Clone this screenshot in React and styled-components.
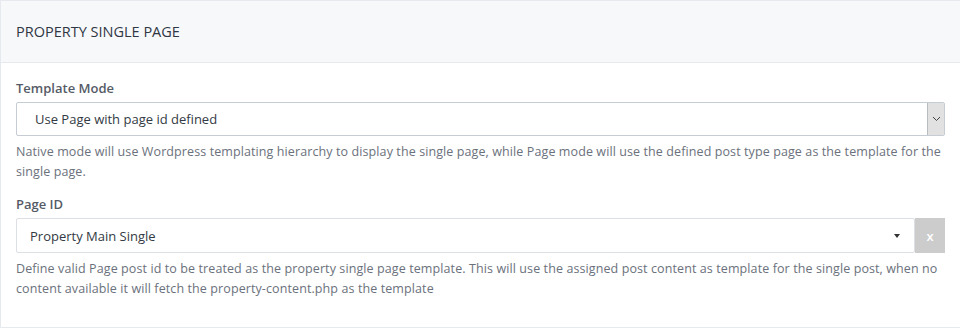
import React from 'react';
import styled, { createGlobalStyle } from 'styled-components';

const GlobalStyle = createGlobalStyle`
  body {
    margin: 0;
    background: #fff;
    font-family: "Open Sans", "Noto Sans", sans-serif;
  }
`;

const Card = styled.section`
  width: 980px;
  height: 326px;
  border: 1px solid #e6e9ed;
  border-right: none;
  background: #fff;
  overflow: hidden;
`;

const CardHeader = styled.header`
  height: 61px;
  display: flex;
  align-items: center;
  padding: 0 15px;
  background: #f7f8fa;
  border-bottom: 1px solid #e6e9ed;
  font-size: 14.5px;
  color: #2f3744;
`;

const CardBody = styled.div`
  width: 929px;
  padding: 16px 15px 0;
`;

const Field = styled.div`
  margin-bottom: 13px;
`;

const Label = styled.label`
  display: block;
  font-size: 13px;
  font-weight: 600;
  color: #555b66;
  margin-bottom: 5px;
  line-height: 18px;
`;

const Row = styled.div`
  display: flex;
  height: ${({ tall }) => (tall ? 35 : 34)}px;
`;

const SelectBox = styled.div`
  flex: 1;
  display: flex;
  align-items: center;
  padding-left: ${({ inset }) => inset}px;
  border: 1px solid ${({ strong }) => (strong ? '#c6ccd4' : '#dcdfe3')};
  border-radius: 2px;
  font-size: 13px;
  color: #333a44;
`;

const ChevronButton = styled.span`
  margin-left: auto;
  width: 16px;
  height: 32px;
  display: flex;
  align-items: center;
  justify-content: center;
  background: #e1e1e1;
  border-left: 1px solid #b9bcc0;
`;

const Caret = styled.span`
  margin-left: auto;
  margin-right: 14px;
  width: 0;
  height: 0;
  border-left: 3.5px solid transparent;
  border-right: 3.5px solid transparent;
  border-top: 4px solid #333;
`;

const ClearButton = styled.button`
  width: 30px;
  border: none;
  background: #cccccc;
  color: #fff;
  font-family: inherit;
  font-size: 13px;
  font-weight: 600;
  padding: 0;
`;

const Help = styled.p`
  margin: 6px 0 0;
  font-size: 12.5px;
  letter-spacing: 0.1px;
  line-height: 20px;
  color: #6b717c;
`;

const App = () => (
  <>
    <GlobalStyle />
    <Card>
      <CardHeader>PROPERTY SINGLE PAGE</CardHeader>
      <CardBody>
        <Field>
          <Label>Template Mode</Label>
          <Row>
            <SelectBox inset={18} strong>
              Use Page with page id defined
              <ChevronButton>
                <svg width="9" height="6" viewBox="0 0 9 6">
                  <path d="M1 1l3.5 3.5L8 1" fill="none" stroke="#444" strokeWidth="1" />
                </svg>
              </ChevronButton>
            </SelectBox>
          </Row>
          <Help>
            Native mode will use Wordpress templating hierarchy to display the single page, while Page mode
            will use the defined post type page as the template for the single page.
          </Help>
        </Field>
        <Field>
          <Label>Page ID</Label>
          <Row tall>
            <SelectBox inset={13}>
              Property Main Single
              <Caret />
            </SelectBox>
            <ClearButton>x</ClearButton>
          </Row>
          <Help>
            Define valid Page post id to be treated as the property single page template. This will use the
            assigned post content as template for the single post, when no content available it will fetch the
            property-content.php as the template
          </Help>
        </Field>
      </CardBody>
    </Card>
  </>
);

export default App;
